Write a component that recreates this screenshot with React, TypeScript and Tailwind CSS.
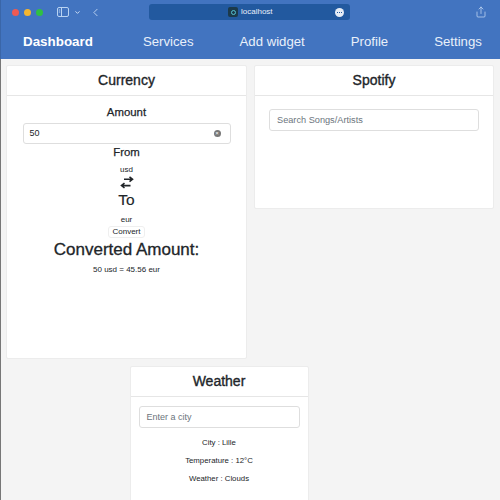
import { ChevronDown, ChevronLeft, Share } from 'lucide-react'

function Card({ title, className, children }: { title: string; className: string; children: React.ReactNode }) {
  return (
    <div className={`bg-white border border-[#ececec] rounded-[2px] flex flex-col ${className}`}>
      <div className="h-[30px] shrink-0 flex items-center justify-center border-b border-[#e6e6e6] text-[14px] text-[#212529] [-webkit-text-stroke:0.35px_#212529]">
        {title}
      </div>
      {children}
    </div>
  )
}

export default function App() {
  return (
    <div className="w-[500px] h-[500px] overflow-hidden bg-[#f4f4f4] shadow-[inset_1px_0_0_#777] font-['Liberation_Sans',Arial,sans-serif] text-[#212529]">
      {/* Browser bar and nav */}
      <header className="h-[59px] bg-[#4274c0] shadow-[inset_1px_0_0_#3a66a8] text-white">
        <div className="h-[24px] flex items-center">
          <div className="flex items-center gap-[5px] ml-[12px]">
            <span className="w-[7px] h-[7px] rounded-full bg-[#ee5a52]" />
            <span className="w-[7px] h-[7px] rounded-full bg-[#f5b62f]" />
            <span className="w-[7px] h-[7px] rounded-full bg-[#2fc043]" />
          </div>
          <svg className="ml-[14px] w-[12px] h-[10px] text-[#b9d3f2]" viewBox="0 0 12 10" fill="none" stroke="currentColor">
            <rect x="0.5" y="0.5" width="11" height="9" rx="1.5" />
            <path d="M4.5 0.5v9" />
            <path d="M1.8 3h1.4M1.8 5h1.4" />
          </svg>
          <ChevronDown className="ml-[5px] w-[7px] h-[7px] text-[#dce8f8]" strokeWidth={3} />
          <ChevronLeft className="ml-[8px] w-[13px] h-[13px] text-[#cfe0f6]" strokeWidth={1.5} />
          <div className="ml-[47px] w-[201px] h-[16px] rounded-[3px] bg-[#22599f] flex items-center relative">
            <div className="ml-[79px] flex items-center gap-[3px]">
              <span className="w-[10px] h-[10px] rounded-[2px] bg-[#1c3a4a] flex items-center justify-center">
                <span className="w-[5px] h-[5px] rounded-full border border-[#53c1d2]" />
              </span>
              <span className="text-[8px] text-[#e8eff9]">localhost</span>
            </div>
            <span className="absolute right-[6px] top-[4px] w-[9px] h-[9px] rounded-full bg-[#e6edf6] flex items-center justify-center gap-[1px]">
              <span className="w-[1px] h-[1px] bg-[#22599f]" />
              <span className="w-[1px] h-[1px] bg-[#22599f]" />
              <span className="w-[1px] h-[1px] bg-[#22599f]" />
            </span>
          </div>
          <Share className="ml-auto mr-[13px] w-[12px] h-[12px] text-[#c3d8f3]" strokeWidth={1.5} />
        </div>
        <nav className="h-[35px] pt-[1px] flex items-center gap-[46px] pl-[23px] text-[13.2px] leading-[16px] text-[#e9f0fa]">
          <span className="font-bold text-[13.4px] leading-[16px] text-white mr-[4px]">Dashboard</span>
          <span>Services</span>
          <span>Add widget</span>
          <span>Profile</span>
          <span>Settings</span>
        </nav>
      </header>

      <main className="px-[6px] pt-[6px]">
        <div className="flex items-start gap-[7px]">
          <Card title="Currency" className="w-[241px] h-[294px]">
            <div className="flex flex-col items-center px-[16px] pt-[9px]">
              <div className="text-[11.4px] leading-[15px] [-webkit-text-stroke:0.25px_#212529]">Amount</div>
              <div className="mt-[3px] w-[208px] h-[21px] border border-[#dedede] rounded-[3px] flex items-center justify-between pl-[6px] pr-[9px] text-[9px]">
                50
                <span className="w-[7px] h-[7px] rounded-full bg-[#777] text-white text-[6px] leading-[7px] text-center">×</span>
              </div>
              <div className="mt-[1px] text-[11.4px] leading-[15px] [-webkit-text-stroke:0.25px_#212529]">From</div>
              <div className="mt-[5px] text-[8px] leading-[10px]">usd</div>
              <svg className="mt-[1px] w-[14px] h-[13px]" viewBox="0 0 14 13" fill="none" stroke="#212529" strokeWidth="1.6">
                <path d="M4 3.2h8.5M9.5 0.8l3 2.4-3 2.4" />
                <path d="M10.5 9.6H1.5M4.5 7.2l-3 2.4 3 2.4" />
              </svg>
              <div className="mt-[2px] text-[15.5px] leading-[17px] [-webkit-text-stroke:0.15px_#212529]">To</div>
              <div className="mt-[7px] text-[8px] leading-[10px]">eur</div>
              <div className="mt-[1px] h-[12px] px-[3px] border border-[#efefef] rounded-[3px] text-[8px] leading-[10px]">Convert</div>
              <div className="mt-[1px] text-[17px] leading-[22px] [-webkit-text-stroke:0.3px_#212529]">Converted Amount:</div>
              <div className="mt-[4px] text-[8px] leading-[10px]">50 usd = 45.56 eur</div>
            </div>
          </Card>
          <Card title="Spotify" className="w-[241px] h-[144px]">
            <div className="px-[14px] pt-[13px]">
              <div className="h-[22px] border border-[#dedede] rounded-[3px] flex items-center pl-[7px] pt-[2px] text-[9.2px] text-[#6c757d]">
                Search Songs/Artists
              </div>
            </div>
          </Card>
        </div>

        <Card title="Weather" className="w-[179px] h-[160px] mx-auto mt-[7px] translate-x-[-31px]">
          <div className="px-[8px] pt-[9px] flex flex-col items-center">
            <div className="w-full h-[22px] border border-[#dedede] rounded-[3px] flex items-center pl-[7px] pt-[2px] text-[9px] text-[#6c757d]">
              Enter a city
            </div>
            <div className="mt-[10px] text-[7.8px] leading-[10px]">City : Lille</div>
            <div className="mt-[8px] text-[7.8px] leading-[10px]">Temperature : 12°C</div>
            <div className="mt-[8px] text-[7.8px] leading-[10px]">Weather : Clouds</div>
          </div>
        </Card>
      </main>
    </div>
  )
}
